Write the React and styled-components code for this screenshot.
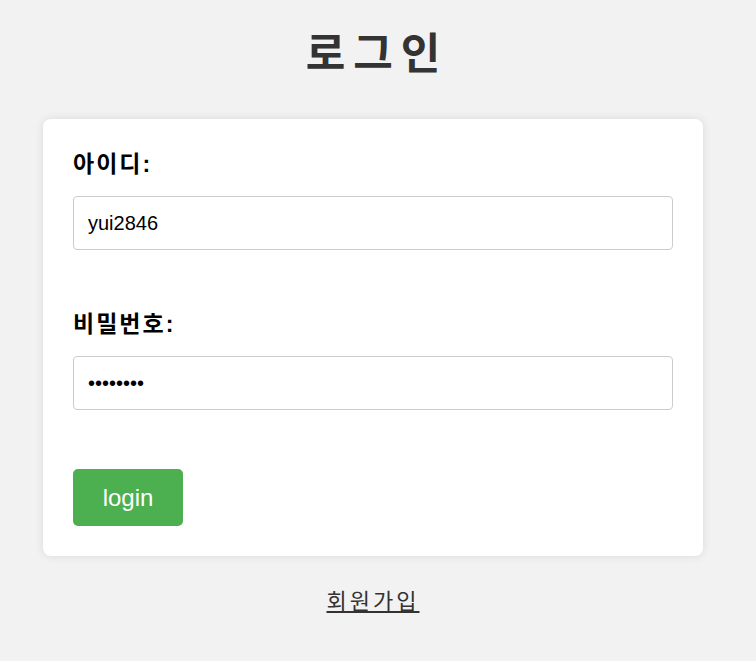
import React from "react";
import styled, { createGlobalStyle } from "styled-components";

const GlobalStyle = createGlobalStyle`
  html, body {
    margin: 0;
    padding: 0;
    background-color: #f2f2f2;
    font-family: "Liberation Sans", Arial, "Noto Sans CJK KR", sans-serif;
  }
`;

export default function App() {
  return (
    <>
      <GlobalStyle />
      <Page>
        <Column>
          <Title>로그인</Title>
          <Card>
            <FormGroup>
              <Label htmlFor="userId">아이디:</Label>
              <Input id="userId" type="text" defaultValue="yui2846" />
            </FormGroup>
            <FormGroup>
              <Label htmlFor="userPw">비밀번호:</Label>
              <Input id="userPw" type="password" defaultValue="12345678" />
            </FormGroup>
            <Button type="button">login</Button>
          </Card>
          <SignupLink href="#">회원가입</SignupLink>
        </Column>
      </Page>
    </>
  );
}

const Page = styled.div`
  display: flex;
  justify-content: center;
  padding: 0 53px 0 43px;
`;

const Column = styled.div`
  width: 660px;
  display: flex;
  flex-direction: column;
  align-items: center;
`;

const Title = styled.h1`
  margin: 24px 0 35px;
  padding-left: 8px;
  font-size: 43px;
  line-height: 60px;
  letter-spacing: 8px;
  font-weight: 700;
  color: #333;
`;

const Card = styled.div`
  box-sizing: border-box;
  width: 100%;
  padding: 30px;
  background: #fff;
  border-radius: 8px;
  box-shadow: 0 0 10px rgba(0, 0, 0, 0.1);
`;

const FormGroup = styled.div`
  margin-bottom: 59px;
`;

const Label = styled.label`
  display: block;
  margin-bottom: 17px;
  font-size: 23px;
  line-height: 30px;
  letter-spacing: 2px;
  font-weight: 700;
  color: #000;
`;

const Input = styled.input`
  box-sizing: border-box;
  display: block;
  width: 100%;
  height: 54px;
  padding: 0 14px;
  font-family: "Liberation Sans", Arial, sans-serif;
  font-size: 20px;
  color: #000;
  border: 1px solid #ccc;
  border-radius: 4px;
  outline: none;
`;

const Button = styled.button`
  display: block;
  width: 110px;
  height: 57px;
  border: none;
  border-radius: 5px;
  background-color: #4caf50;
  color: #fff;
  font-family: "Liberation Sans", Arial, sans-serif;
  font-size: 24px;
  cursor: pointer;
`;

const SignupLink = styled.a`
  margin-top: 31px;
  font-size: 22px;
  line-height: 30px;
  letter-spacing: 3px;
  color: #333;
  text-decoration: underline;
`;
